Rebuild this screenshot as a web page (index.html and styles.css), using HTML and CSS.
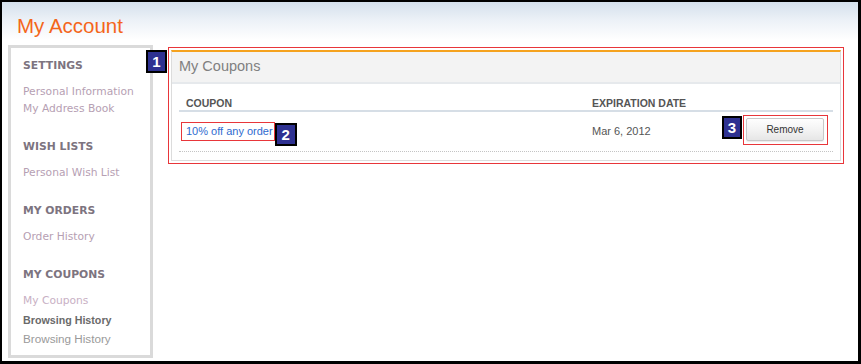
FILE: index.html
```html
<!DOCTYPE html>
<html lang="en">
<head>
<meta charset="utf-8">
<title>My Account</title>
<link rel="stylesheet" href="styles.css">
</head>
<body>
<div class="frame">
  <header class="page-header">
    <h1 class="page-title">My Account</h1>
  </header>
  <div class="content">
    <nav class="sidebar">
      <div class="nav-group">
        <div class="nav-heading">SETTINGS</div>
        <div class="nav-link">Personal Information</div>
        <div class="nav-link">My Address Book</div>
      </div>
      <div class="nav-group">
        <div class="nav-heading">WISH LISTS</div>
        <div class="nav-link">Personal Wish List</div>
      </div>
      <div class="nav-group">
        <div class="nav-heading">MY ORDERS</div>
        <div class="nav-link">Order History</div>
      </div>
      <div class="nav-group">
        <div class="nav-heading">MY COUPONS</div>
        <div class="nav-link nav-link-light">My Coupons</div>
        <div class="nav-sub-bold">Browsing History</div>
        <div class="nav-sub">Browsing History</div>
      </div>
    </nav>
    <main class="highlight-box">
      <span class="badge badge-one">1</span>
      <section class="panel">
        <div class="panel-header">My Coupons</div>
        <div class="panel-body">
          <div class="table-head">
            <div class="col-coupon">COUPON</div>
            <div class="col-date">EXPIRATION DATE</div>
          </div>
          <div class="table-row">
            <div class="col-coupon cell-link">
              <a class="coupon-link" href="#">10% off any order</a>
              <span class="badge badge-two">2</span>
            </div>
            <div class="col-date cell-date">Mar 6, 2012</div>
            <div class="col-action">
              <span class="badge badge-three">3</span>
              <span class="button-outline"><button class="remove-btn" type="button">Remove</button></span>
            </div>
          </div>
        </div>
      </section>
    </main>
  </div>
</div>
</body>
</html>
```
FILE: styles.css
```css
* { box-sizing: border-box; }

html, body {
  margin: 0;
  padding: 0;
  background: #fff;
}

.frame {
  width: 861px;
  height: 364px;
  border-style: solid;
  border-color: #000;
  border-width: 2px 3px 3px 2px;
  background: linear-gradient(to bottom, #d4e0ec 0px, #ecf1f7 18px, #ffffff 38px);
  overflow: hidden;
}

.page-header {
  padding: 12px 0 7px 15px;
}

.page-title {
  margin: 0;
  font-family: "Liberation Sans", Arial, sans-serif;
  font-weight: normal;
  font-size: 20.5px;
  line-height: 24px;
  color: #f4661b;
}

.content {
  display: flex;
  align-items: flex-start;
  padding-left: 6px;
}

/* Sidebar */
.sidebar {
  width: 145px;
  border: 3px solid #dadada;
  background: #fff;
  padding: 9px 6px 8px 12px;
}

.nav-group { margin-bottom: 21px; }
.nav-group:last-child { margin-bottom: 0; }

.nav-heading {
  font-family: "DejaVu Sans", Verdana, sans-serif;
  font-weight: bold;
  font-size: 10.8px;
  line-height: 17px;
  color: #7d7480;
  margin-bottom: 9px;
  white-space: nowrap;
}

.nav-link {
  font-family: "DejaVu Sans", Verdana, sans-serif;
  font-size: 10.7px;
  line-height: 17px;
  color: #b6a0b3;
  white-space: nowrap;
}

.nav-link-light { color: #c8b0c4; }

.nav-sub-bold {
  margin-top: 2px;
  font-family: "Liberation Sans", Arial, sans-serif;
  font-weight: bold;
  font-size: 10.7px;
  line-height: 19px;
  color: #6a6a6a;
  white-space: nowrap;
}

.nav-sub {
  font-family: "Liberation Sans", Arial, sans-serif;
  font-size: 11.7px;
  line-height: 17px;
  color: #9a9a9a;
  white-space: nowrap;
}

/* Main highlighted area */
.highlight-box {
  position: relative;
  flex: 1;
  margin: 2px 14px 0 15px;
  border: 1px solid #e8363a;
  padding: 2px;
}

.badge {
  display: flex;
  align-items: center;
  justify-content: center;
  width: 21px;
  height: 23px;
  border: 2px solid #000;
  background: #2e3191;
  color: #fff;
  font-family: "Liberation Sans", Arial, sans-serif;
  font-weight: bold;
  font-size: 15px;
  line-height: 1;
  flex: none;
}

.badge-one {
  position: absolute;
  left: -23px;
  top: 2px;
}

.panel {
  border: 1px solid #dcdcdc;
  border-top: 2px solid #f5a21e;
  background: #fff;
  padding-bottom: 8px;
}

.panel-header {
  background: #f3f3f3;
  border-bottom: 2px solid #e6e9ec;
  padding: 6px 7px 7px;
  font-family: "Liberation Sans", Arial, sans-serif;
  font-size: 14.5px;
  line-height: 17px;
  color: #808080;
}

.panel-body {
  padding: 0 7px;
}

.table-head {
  display: flex;
  border-bottom: 2px solid #d6dee6;
  padding-top: 12px;
  font-family: "Liberation Sans", Arial, sans-serif;
  font-weight: bold;
  font-size: 10.5px;
  line-height: 14px;
  color: #555;
}

.table-head .col-coupon { padding-left: 7px; }

.col-coupon { width: 413px; flex: none; }
.col-date { width: 130px; flex: none; }
.col-action {
  flex: 1;
  display: flex;
  justify-content: flex-end;
  align-items: flex-start;
  padding-right: 5px;
  padding-top: 3px;
}

.table-row {
  display: flex;
  align-items: flex-start;
  height: 40px;
  border-bottom: 1px dotted #c4c4c4;
  font-family: "Liberation Sans", Arial, sans-serif;
}

.cell-link {
  display: flex;
  align-items: flex-start;
  padding-left: 2px;
  padding-top: 10px;
}

.coupon-link {
  display: block;
  border: 1px solid #e8363a;
  padding: 2px 1px 2px 4px;
  font-size: 11px;
  line-height: 13px;
  color: #2f6bcf;
  text-decoration: none;
  white-space: nowrap;
}

.badge-two {
  margin-top: 1px;
  width: 22px;
}

.cell-date {
  padding-top: 13px;
  font-size: 11px;
  line-height: 13px;
  color: #555;
}

.badge-three {
  margin-top: 1px;
  width: 20px;
  margin-right: 1px;
}

.button-outline {
  display: block;
  border: 1px solid #e8363a;
  padding: 2px 3px 3px 2px;
}

.remove-btn {
  display: block;
  width: 78px;
  height: 23px;
  margin: 0;
  padding: 0;
  border: 1px solid #c8c8c8;
  border-radius: 2px;
  background: linear-gradient(to bottom, #fefefe 0%, #f1f1f1 60%, #e6e6e6 100%);
  box-shadow: 0 1px 1px rgba(0,0,0,0.08);
  font-family: "Liberation Sans", Arial, sans-serif;
  font-size: 10px;
  color: #333;
  cursor: pointer;
}
```
